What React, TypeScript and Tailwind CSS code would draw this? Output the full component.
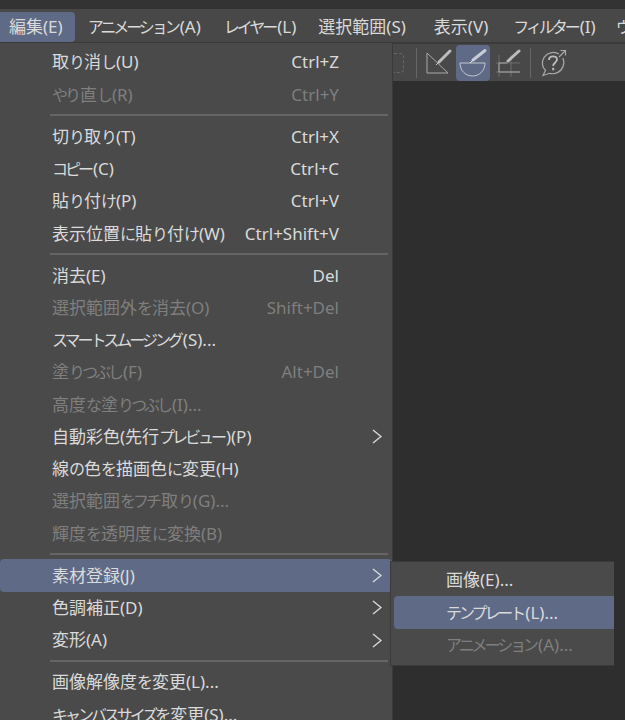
type Row =
  | { sep: true }
  | { sep?: false; label: string; keys?: string; off?: boolean; sub?: boolean; active?: boolean };

const MENU_BAR = [
  { label: "編集(E)", cls: "pl-[9px] pr-[12px] bg-[#5f6a87] rounded-tr-sm rounded-br-sm" },
  { label: "アニメーション(A)", cls: "pl-[13px] pr-[11px]" },
  { label: "レイヤー(L)", cls: "pl-[12px] pr-[11px]" },
  { label: "選択範囲(S)", cls: "pl-[11px] pr-[14px]" },
  { label: "表示(V)", cls: "pl-[14px] pr-[12px]" },
  { label: "フィルター(I)", cls: "pl-[13px] pr-[10px]" },
  { label: "ウィンドウ(W)", cls: "pl-[10px]" },
];

const ROWS: Row[] = [
  { label: "取り消し(U)", keys: "Ctrl+Z" },
  { label: "やり直し(R)", keys: "Ctrl+Y", off: true },
  { sep: true },
  { label: "切り取り(T)", keys: "Ctrl+X" },
  { label: "コピー(C)", keys: "Ctrl+C" },
  { label: "貼り付け(P)", keys: "Ctrl+V" },
  { label: "表示位置に貼り付け(W)", keys: "Ctrl+Shift+V" },
  { sep: true },
  { label: "消去(E)", keys: "Del" },
  { label: "選択範囲外を消去(O)", keys: "Shift+Del", off: true },
  { label: "スマートスムージング(S)..." },
  { label: "塗りつぶし(F)", keys: "Alt+Del", off: true },
  { label: "高度な塗りつぶし(I)...", off: true },
  { label: "自動彩色(先行プレビュー)(P)", sub: true },
  { label: "線の色を描画色に変更(H)" },
  { label: "選択範囲をフチ取り(G)...", off: true },
  { label: "輝度を透明度に変換(B)", off: true },
  { sep: true },
  { label: "素材登録(J)", sub: true, active: true },
  { label: "色調補正(D)", sub: true },
  { label: "変形(A)", sub: true },
  { sep: true },
  { label: "画像解像度を変更(L)..." },
  { label: "キャンバスサイズを変更(S)..." },
];

// kana sets narrower than kanji in the menu font
function Jp({ text }: { text: string }) {
  const parts = text.split(/([\u3040-\u30ff]+)/);
  return (
    <>
      {parts.map((p, i) =>
        i % 2 === 1 ? (
          <span key={i} className="text-[16px] tracking-[-0.19em] pr-[2px]">
            {p}
          </span>
        ) : (
          p
        ),
      )}
    </>
  );
}

function Chevron() {
  return (
    <svg className="absolute right-[10px]" width="10" height="15" viewBox="0 0 10 15" fill="none">
      <path d="M1 1L9 7.5L1 14" stroke="#dadada" strokeWidth="1.4" />
    </svg>
  );
}

function MenuRow({ row }: { row: Extract<Row, { label: string }> }) {
  return (
    <div
      className={`h-[32.25px] shrink-0 flex items-center pl-[52px] pr-[53px] rounded-sm ${
        row.active ? "bg-[#5f6a87]" : ""
      } ${row.off ? "text-[#7f7f7f]" : "text-[#dadada]"} relative`}
    >
      <span className="flex-1 whitespace-nowrap">
        <Jp text={row.label} />
      </span>
      {row.keys && <span className="whitespace-nowrap">{row.keys}</span>}
      {row.sub && <Chevron />}
    </div>
  );
}

function RulerIcon() {
  return (
    <svg className="shrink-0" width="28" height="30" viewBox="0 0 28 30" fill="none">
      <path d="M2 5V25H23L2 5Z" stroke="#a8a8a8" strokeWidth="1" />
      <path d="M14 14L25 3" stroke="#bcbcbc" strokeWidth="3" strokeLinecap="round" />
      <path d="M11 17L14 14" stroke="#d0d0d0" strokeWidth="1" />
    </svg>
  );
}

function BowlIcon() {
  return (
    <svg className="shrink-0" width="30" height="30" viewBox="0 0 30 30" fill="none">
      <path d="M2 15H27C27 23 21 28 14.5 28C8 28 2 23 2 15Z" stroke="#c4c8d0" strokeWidth="1" />
      <path d="M15 12L27 2.5" stroke="#c8ccd4" strokeWidth="3" strokeLinecap="round" />
      <path d="M12 15L15 12" stroke="#dfe2e8" strokeWidth="1" />
    </svg>
  );
}

function GuideIcon() {
  return (
    <svg className="shrink-0" width="28" height="30" viewBox="0 0 28 30" fill="none">
      <path d="M1 15H25M1 24H25M4 7V29M16 7V29" stroke="#6c6c6c" strokeWidth="1" />
      <path d="M4 24V15H12M4 24H25" stroke="#a8a8a8" strokeWidth="1" />
      <path d="M13 13L24 3" stroke="#bcbcbc" strokeWidth="3" strokeLinecap="round" />
    </svg>
  );
}

function HelpIcon() {
  return (
    <svg className="shrink-0" width="30" height="30" viewBox="0 0 30 30" fill="none">
      <path
        d="M20 6C17.5 4.5 14.5 4 11.5 4.8C6 6.3 2.5 11.5 3.5 17C4 19.2 5 21 6.5 22.3L4 27.5L10.5 25.3C16.5 27 22.5 23.5 24.2 18C25.2 15 24.8 12 23.8 10"
        stroke="#a8a8a8"
        strokeWidth="1.2"
      />
      <path d="M20 9L26 3M21.5 2.5H26.5V7.5" stroke="#a8a8a8" strokeWidth="1.2" />
      <path d="M10 12C10 9.5 11.8 8.3 14 8.3C16.2 8.3 18 9.5 18 11.6C18 14.5 14.2 14.5 14.2 18" stroke="#bcbcbc" strokeWidth="1.8" />
      <path d="M14.2 19.8V22.3" stroke="#bcbcbc" strokeWidth="2" />
    </svg>
  );
}

export default function App() {
  return (
    <div className="w-[625px] h-[720px] overflow-hidden flex flex-col bg-[#2e2e2e] text-[17px] font-['Noto_Sans','Noto_Sans_CJK_JP',sans-serif] text-[#dadada]">
      {/* title strip */}
      <div className="h-[9px] shrink-0 bg-[#333333]" />

      {/* menu bar */}
      <div className="h-[33px] shrink-0 bg-[#484848] flex items-stretch whitespace-nowrap pt-[3px]">
        {MENU_BAR.map((m) => (
          <div key={m.label} className={`shrink-0 flex items-center ${m.cls}`}>
            <span>
              <Jp text={m.label} />
            </span>
          </div>
        ))}
      </div>

      <div className="relative flex-1 flex flex-col">
        {/* tool bar */}
        <div className="h-[39px] shrink-0 bg-[#484848] border-t-2 border-[#3a3a3a] flex items-center pl-[394px]">
          <div className="w-[10px] h-[20px] border border-l-0 border-dashed border-[#686868] rounded-r-sm" />
          <div className="w-px h-[30px] bg-[#676767] ml-[12px]" />
          <div className="ml-[8px] flex">
            <RulerIcon />
          </div>
          <div className="w-[34px] h-[36px] bg-[#5f6a87] rounded-sm flex items-center justify-center ml-[3px]">
            <BowlIcon />
          </div>
          <div className="ml-[5px] flex">
            <GuideIcon />
          </div>
          <div className="w-px h-[30px] bg-[#676767] ml-[7px]" />
          <div className="ml-[8px] flex">
            <HelpIcon />
          </div>
        </div>

        {/* edit menu */}
        <div className="absolute left-0 top-0 bottom-0 w-[393px] bg-[#4a4a4a] border-t border-r border-[#3a3a3a] pt-[3px] flex flex-col">
          {ROWS.map((row, i) =>
            row.sep ? (
              <div key={i} className="h-[9.9px] shrink-0 flex items-center pl-[50px] pr-[4px]">
                <div className="h-[2px] w-full bg-[#656565]" />
              </div>
            ) : (
              <MenuRow key={i} row={row} />
            ),
          )}
        </div>

        {/* submenu */}
        <div className="absolute left-[390px] top-[519px] w-[224px] h-[105px] bg-[#4a4a4a] border border-r-0 border-[#3a3a3a] pt-[2px] pl-[3px]">
          <div className="h-[32px] flex items-center pl-[52px] text-[#dadada]">
            <span>
              <Jp text="画像(E)..." />
            </span>
          </div>
          <div className="h-[33px] flex items-center pl-[52px] bg-[#5f6a87] rounded-l-sm text-[#dadada]">
            <span>
              <Jp text="テンプレート(L)..." />
            </span>
          </div>
          <div className="h-[32px] flex items-center pl-[52px] text-[#7f7f7f]">
            <span>
              <Jp text="アニメーション(A)..." />
            </span>
          </div>
        </div>
      </div>
    </div>
  );
}
